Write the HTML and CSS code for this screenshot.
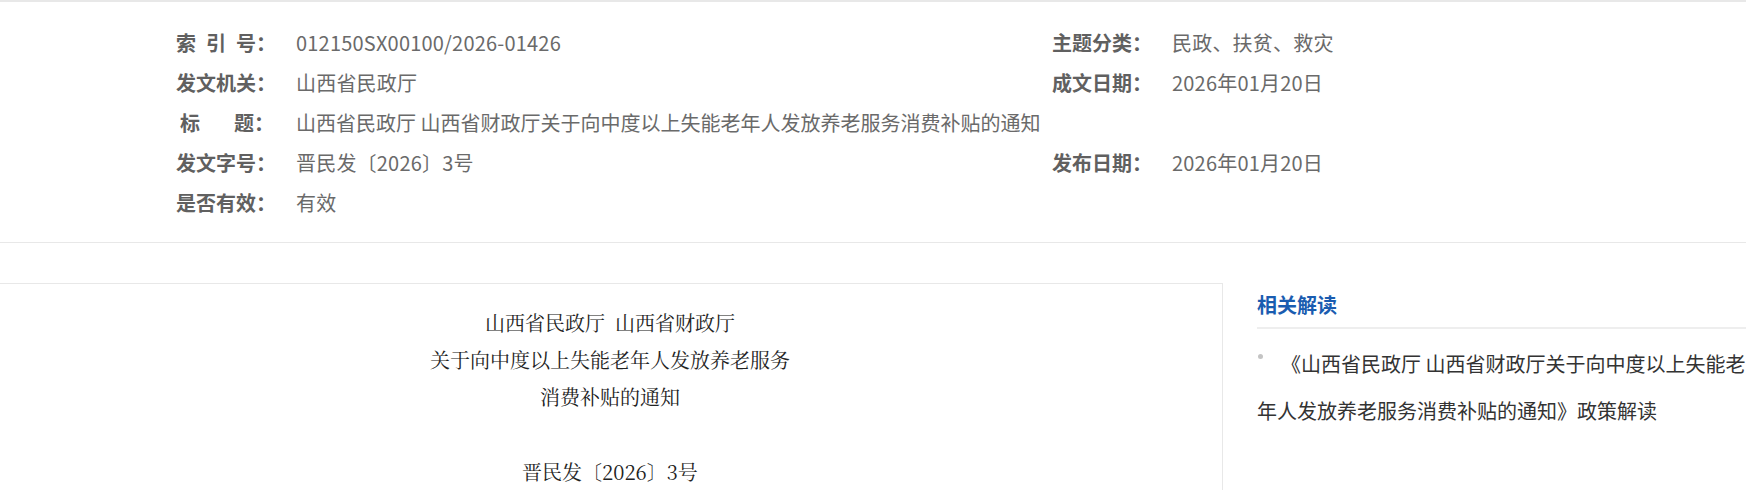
FILE: index.html
```html
<!DOCTYPE html>
<html lang="zh-CN">
<head>
<meta charset="UTF-8">
<meta name="viewport" content="width=device-width, initial-scale=1.0">
<title>山西省民政厅 山西省财政厅关于向中度以上失能老年人发放养老服务消费补贴的通知</title>
<link rel="stylesheet" href="styles.css">
</head>
<body>
<div class="info">
    <div class="info-grid">
        <div class="lbl">索&ensp;引&ensp;号：</div>
        <div class="val">012150SX00100/2026-01426</div>
        <div class="lbl">主题分类：</div>
        <div class="val">民政、扶贫、救灾</div>

        <div class="lbl">发文机关：</div>
        <div class="val">山西省民政厅</div>
        <div class="lbl">成文日期：</div>
        <div class="val">2026年01月20日</div>

        <div class="lbl">&thinsp;标　&ensp;&thinsp;题：</div>
        <div class="val wide">山西省民政厅 山西省财政厅关于向中度以上失能老年人发放养老服务消费补贴的通知</div>

        <div class="lbl">发文字号：</div>
        <div class="val">晋民发〔2026〕3号</div>
        <div class="lbl">发布日期：</div>
        <div class="val">2026年01月20日</div>

        <div class="lbl">是否有效：</div>
        <div class="val">有效</div>
    </div>
</div>

<div class="main">
    <div class="article">
        <p>山西省民政厅&ensp;山西省财政厅</p>
        <p>关于向中度以上失能老年人发放养老服务</p>
        <p>消费补贴的通知</p>
        <p class="blank">&nbsp;</p>
        <p class="doc-no">晋民发〔2026〕3号</p>
    </div>
    <div class="side">
        <h3>相关解读</h3>
        <ul class="reads">
            <li><a href="#">《山西省民政厅 山西省财政厅关于向中度以上失能老年人发放养老服务消费补贴的通知》政策解读</a></li>
        </ul>
    </div>
</div>
</body>
</html>
```

FILE: styles.css
```css
body { margin: 0; background: #fff;
    font-family: "Noto Sans CJK SC", "Noto Sans", sans-serif;
}
.info { border-top: 2px solid #e8e8e8; border-bottom: 1px solid #e8e8e8;
    padding: 21px 0 19px;
}
.info-grid { width: 1394px; margin: 0 auto; display: grid;
    grid-template-columns: 120px 756px 120px 1fr;
    font-size: 20px; line-height: 40px;
}
.lbl { font-weight: bold; color: #606060; white-space: nowrap; }
.val { color: #6a6a6a; white-space: nowrap; letter-spacing: 0.2px; }
.val.wide { grid-column: span 3; letter-spacing: 0; }

.main { display: flex; margin: 40px 0 0 -3px; }
.article { width: 1224px; flex: none; min-height: 320px;
    border: 1px solid #e8e8e8; padding-top: 20px; text-align: center;
    font-family: "Noto Serif CJK SC", "AR PL UMing CN", serif;
    font-size: 20px; line-height: 37px; color: #222;
}
.article p { margin: 0; }
.article .doc-no { margin-top: 1px; }

.side { margin-left: 34px; width: 490px; flex: none; }
.side h3 { margin: 0; font-size: 20px; line-height: 44px; color: #1a5cb0;
    border-bottom: 2px solid #eeeeee;
}
.reads { list-style: none; margin: 0; padding: 11px 0 0; }
.reads li { font-size: 20px; line-height: 47px; }
.reads li::before { content: ""; display: inline-block; width: 5px; height: 5px;
    border-radius: 50%; background: #c4c4c4; vertical-align: 13px;
    margin: 0 18px 0 1px;
}
.reads a { color: #333; text-decoration: none; }
```
